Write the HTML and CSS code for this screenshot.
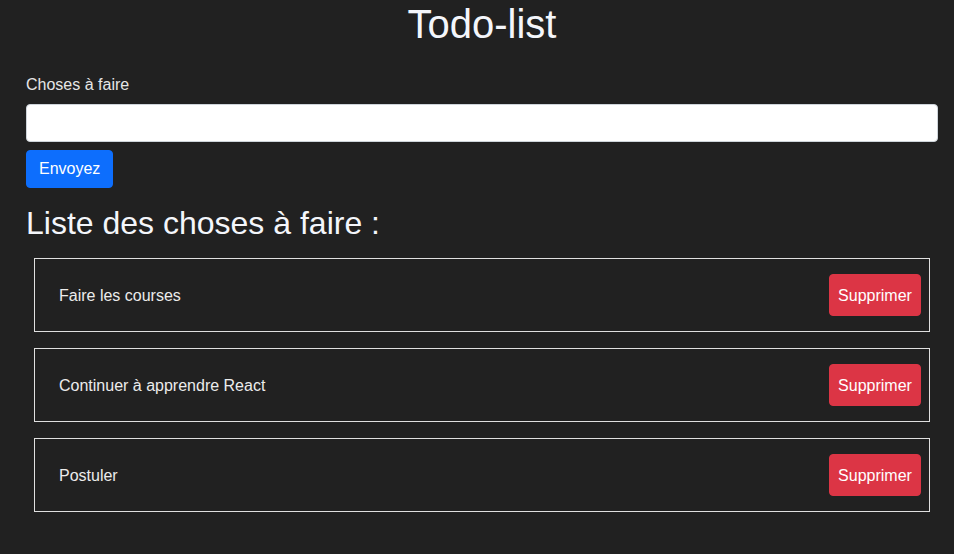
FILE: index.html
```html
<!DOCTYPE html>
<html lang="fr">
<head>
<meta charset="utf-8">
<title>Todo-list</title>
<link rel="stylesheet" href="styles.css">
</head>
<body>
<div class="app">
  <h1 class="title">Todo-list</h1>
  <form class="todo-form">
    <label class="form-label" for="todo">Choses à faire</label>
    <input class="form-control" id="todo" type="text">
    <button class="btn btn-primary" type="button">Envoyez</button>
  </form>
  <h2 class="list-title">Liste des choses à faire :</h2>
  <ul class="todo-list">
    <li class="todo-item"><span class="todo-text">Faire les courses</span><button class="btn btn-danger" type="button">Supprimer</button></li>
    <li class="todo-item"><span class="todo-text">Continuer à apprendre React</span><button class="btn btn-danger" type="button">Supprimer</button></li>
    <li class="todo-item"><span class="todo-text">Postuler</span><button class="btn btn-danger" type="button">Supprimer</button></li>
  </ul>
</div>
</body>
</html>
```

FILE: styles.css
```css
* { box-sizing: border-box; }
html, body {
  margin: 0;
  background: #212121;
  color: #f0f0f0;
  font-family: "Liberation Sans", Arial, sans-serif;
  font-size: 16px;
  line-height: 1.5;
}
.app {
  padding: 0 16px 0 26px;
}
.title {
  margin: 0 0 25px;
  font-size: 40px;
  font-weight: 400;
  line-height: 48px;
  text-align: center;
  color: #f4f6fb;
}
.todo-form {
  display: flex;
  flex-direction: column;
  align-items: flex-start;
}
.form-label {
  display: block;
  margin-bottom: 7px;
  line-height: 24px;
  color: #e6e6e6;
}
.form-control {
  width: 100%;
  height: 38px;
  border: 1px solid #ced4da;
  border-radius: 4px;
  background: #fff;
  margin: 0 0 8px;
  font: inherit;
  padding: 6px 12px;
}
.btn {
  font: inherit;
  font-size: 16px;
  line-height: 24px;
  border: 1px solid transparent;
  border-radius: 4px;
  color: #fff;
  cursor: pointer;
}
.btn-primary {
  background: #0d6efd;
  border-color: #0d6efd;
  height: 38px;
  padding: 6px 12px;
}
.btn-danger {
  background: #dc3545;
  border-color: #dc3545;
  height: 42px;
  padding: 9px 8px 7px;
  width: 92px;
}
.list-title {
  margin: 16px 0 16px;
  font-size: 32px;
  font-weight: 400;
  line-height: 38px;
  color: #f4f6fb;
}
.todo-list {
  list-style: none;
  margin: 0;
  padding: 0 8px;
  display: flex;
  flex-direction: column;
  gap: 16px;
}
.todo-item {
  display: flex;
  align-items: center;
  justify-content: space-between;
  height: 74px;
  border: 1px solid #e0e0e0;
  padding: 0 8px 0 24px;
  color: #ececec;
}
.todo-text {
  padding-top: 2px;
}
```
